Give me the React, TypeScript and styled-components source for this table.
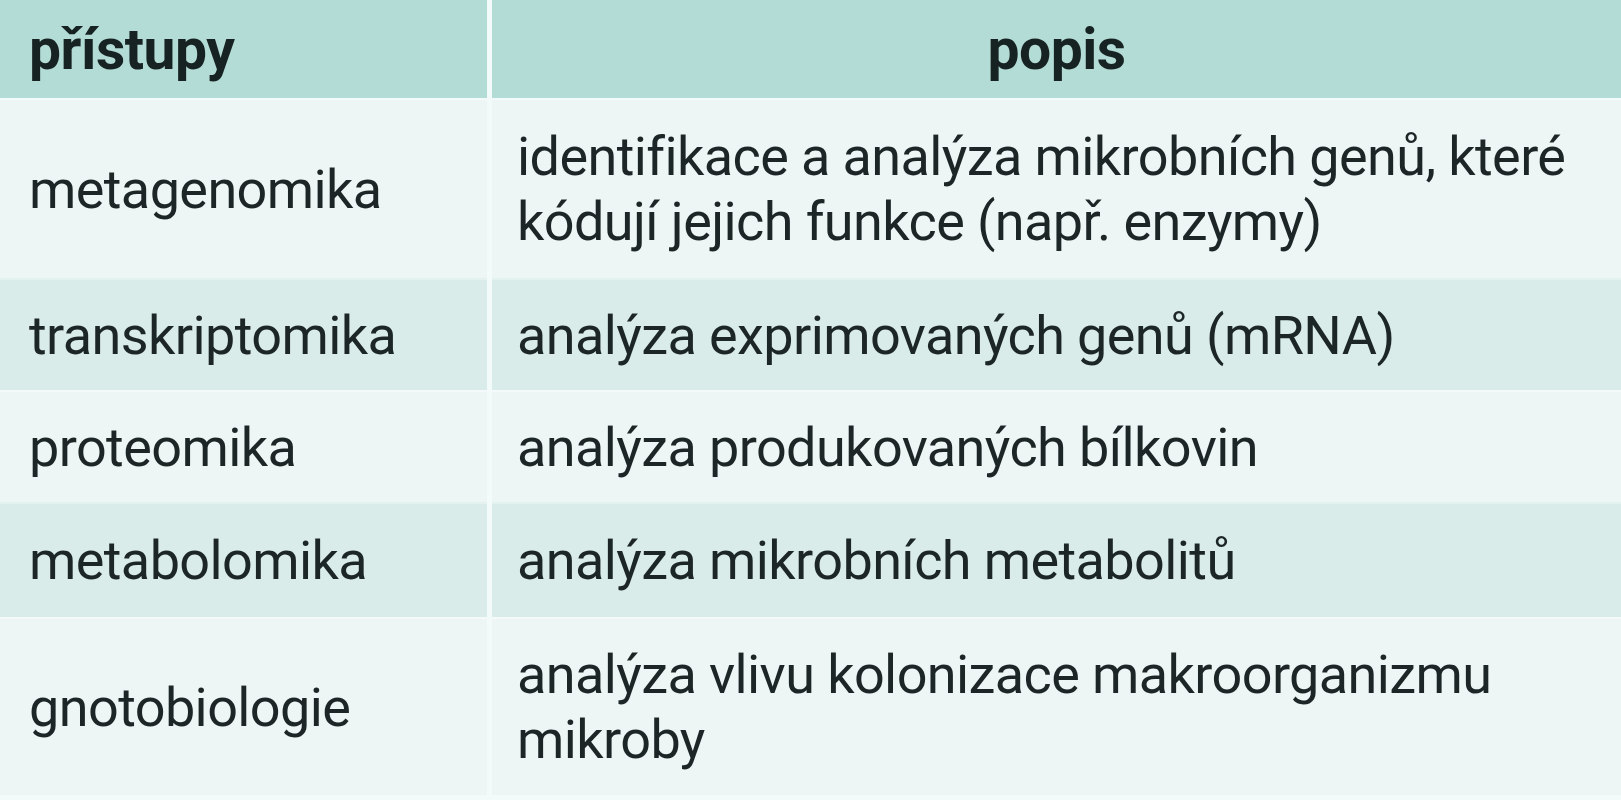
import styled, { createGlobalStyle } from 'styled-components';

type Row = { name: string; text: string; height: number };

const rows: Row[] = [
  { name: 'metagenomika', text: 'identifikace a analýza mikrobních genů, které kódují jejich funkce (např. enzymy)', height: 180 },
  { name: 'transkriptomika', text: 'analýza exprimovaných genů (mRNA)', height: 112 },
  { name: 'proteomika', text: 'analýza produkovaných bílkovin', height: 112 },
  { name: 'metabolomika', text: 'analýza mikrobních metabolitů', height: 115 },
  { name: 'gnotobiologie', text: 'analýza vlivu kolonizace makroorganizmu mikroby', height: 178 },
];

const GlobalStyle = createGlobalStyle`
  html, body {
    margin: 0;
    padding: 0;
    background: #ffffff;
  }
  body {
    font-family: Roboto, "Noto Sans", sans-serif;
    color: #1c2626;
  }
`;

export default function App() {
  return (
    <>
      <GlobalStyle />
      <Table>
        <HeadCell>přístupy</HeadCell>
        <HeadCell $center>popis</HeadCell>
        {rows.map((row, i) => (
          <Line key={i} $striped={i % 2 === 1} $height={row.height}>
            <Cell>{row.name}</Cell>
            <Cell>{row.text}</Cell>
          </Line>
        ))}
      </Table>
    </>
  );
}

const Table = styled.div`
  display: grid;
  grid-template-columns: 487px 1fr;
  column-gap: 5px;
  background: #f3fbfa;
  width: 1621px;
  padding-bottom: 5px;
`;

const HeadCell = styled.div<{ $center?: boolean }>`
  height: 98px;
  display: flex;
  align-items: center;
  justify-content: ${(p) => (p.$center ? 'center' : 'flex-start')};
  padding: 0 29px;
  background: #b3dcd6;
  font-size: 57px;
  font-weight: 700;
  letter-spacing: -0.5px;
  color: #172222;
`;

const Line = styled.div<{ $striped: boolean; $height: number }>`
  display: contents;

  & > * {
    height: ${(p) => p.$height}px;
    background: ${(p) => (p.$striped ? '#d9ecea' : '#edf6f4')};
    border-top: 2px solid ${(p) => (p.$striped ? '#e3f1ef' : '#f3faf9')};
  }
`;

const Cell = styled.div`
  box-sizing: border-box;
  display: flex;
  align-items: center;
  padding: 0 16px 0 29px;

  & + & {
    padding-left: 25px;
  }

  font-size: 54px;
  line-height: 65px;
  letter-spacing: -0.6px;
`;
